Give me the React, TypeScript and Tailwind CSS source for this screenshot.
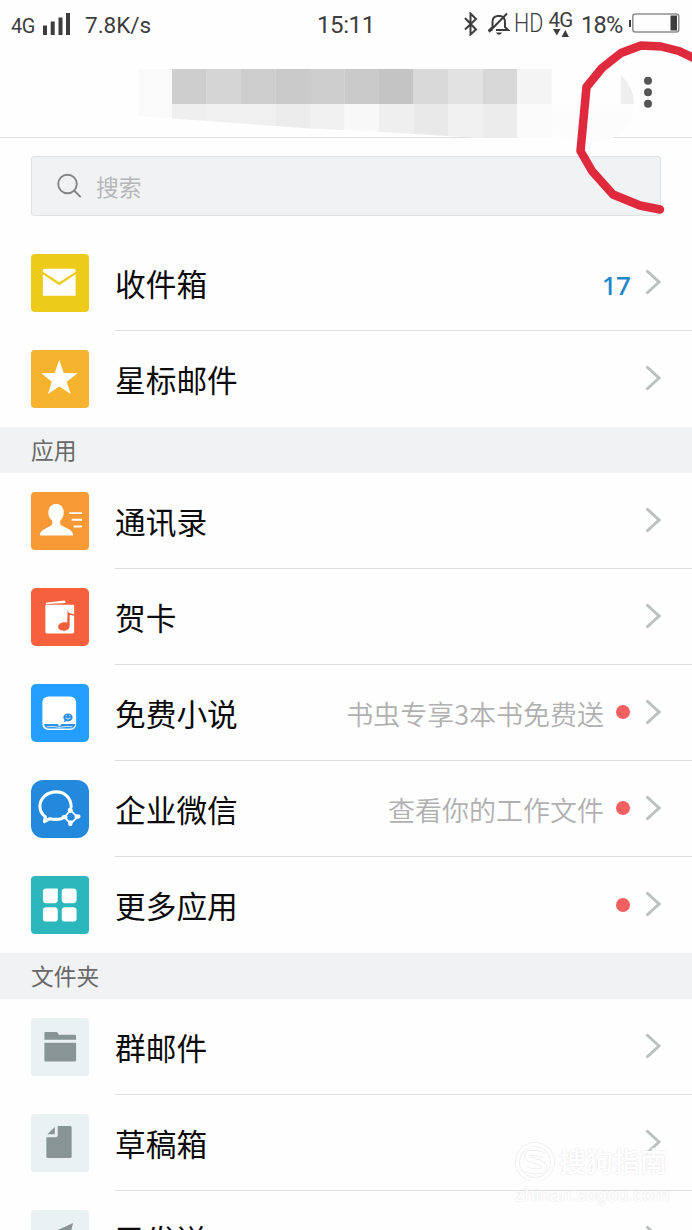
import type { ReactNode } from 'react';

const Chevron = () => (
  <svg className="-mt-0.5 h-[26px] w-4 shrink-0" viewBox="0 0 16 26" fill="none" stroke="#bcc0c1" strokeWidth="3">
    <path d="M1.500 1.500 14 13 1.500 24.500" />
  </svg>
);

type RowProps = {
  label: string;
  tile: string;
  icon: ReactNode;
  count?: string;
  hint?: string;
  dot?: boolean;
  last?: boolean;
};

function Row({ label, tile, icon, count, hint, dot, last }: RowProps) {
  return (
    <li className="flex h-24 shrink-0 items-stretch pl-[31px]">
      <div className={`mt-[19px] size-[57.500px] shrink-0 overflow-hidden ${tile}`}>
        <svg className="size-full" viewBox="0 0 58 58" fill="#fff">
          {icon}
        </svg>
      </div>
      <div className={`ml-[26.500px] flex grow items-center pr-[31px] ${last ? '' : 'border-b border-[#dedfe0]'}`}>
        <span className="grow whitespace-nowrap text-[30.700px] leading-[46px] text-[#0b0b0b]">{label}</span>
        {hint && <span className="mr-[12px] mt-0.5 whitespace-nowrap text-[27px] font-[350] leading-10 text-[#b0b0b0]">{hint}</span>}
        {count && <span className="mr-[15px] mt-1 font-['Noto_Sans',sans-serif] text-[26px] font-medium leading-10 tracking-[-0.800px] text-[#2087c6]">{count}</span>}
        {dot && <span className="-mt-px mr-[15px] size-3.5 shrink-0 rounded-full bg-[#f4605f]" />}
        <Chevron />
      </div>
    </li>
  );
}

const Section = ({ title }: { title: string }) => (
  <h2 className="flex h-[46px] shrink-0 items-center bg-[#f0f2f4] pl-[31px] text-[22.800px] leading-[34px] text-[#686868]">{title}</h2>
);

const MailIcon = (
  <>
    <path d="M14 15h29q2 0 2 2v1L28.500 28.500 12 18v-1q0-2 2-2z" />
    <path d="M12 20.500 28.500 31.500 45 20.500V42H12z" />
  </>
);
const StarIcon = <path d="m28.500 10 4.600 13.200 13.900.3L36 32l4 12.500-11.500-7.800L17 44.500 21 32 10.500 23.500l13.400-.3z" />;
const ContactIcon = (
  <>
    <path d="M25.300 12c5 0 8 4 7.700 9-.2 4-2 6.500-3.500 8v3.500c1.500 3 13 4.500 13 10.500 0 1-.5 1-1 1H10c-1 0-1-.5-1-1.500 1-5.500 11-7 12.500-10V29c-2-1.500-4-4-4-8 0-5.500 2.800-9 7.800-9z" />
    <path d="M38.500 21.300h13M41 28h10.500M43 34.800h8.500" stroke="#fff" strokeWidth="1.900" />
  </>
);
const CardIcon = (
  <>
    <path d="M15 17v-1.200q0-1 1-1.100l18-2.200 1 2.700-18 .9z" />
    <path d="M16 17h26q1.500 0 1.500 1.500V44q0 2-1.500 2H16q-1.500 0-1.500-2V18.500q0-1.500 1.500-1.500z" />
    <path d="M37 21c0 4 2 5 6.500 5.500l-.2 1.500c-2.400-.8-4-.8-4.300-.5v10.500c0 3.500-2.700 5-6 5-4 0-6-1.800-5.600-4.300.6-3.300 5.500-5 9.100-3.700z" fill="#ef5f3b" />
  </>
);
const BookIcon = (
  <>
    <rect x="11.500" y="12.500" width="34" height="34" rx="6" />
    <path d="M13 40.300h14.300q.3 2 1.600 2 1.200 0 1.500-2h14.300q-.8 4.500-5 4.500H18q-4 0-5-4.500z" fill="#2e94e8" />
    <path d="M16 43.300c4-.7 8-.5 11 .3h3.700c3-.8 7-1 11-.3" fill="none" stroke="#fff" strokeWidth=".8" />
    <ellipse cx="37.300" cy="33.700" rx="4.700" ry="4" fill="#2c8fe0" />
    <path d="m34 36-1 2.500 3-1z" fill="#2c8fe0" />
    <path d="M34.800 34.300q2.500 2 5 0" fill="none" stroke="#fff" strokeWidth=".8" />
    <circle cx="35.600" cy="32" r=".6" />
    <circle cx="39" cy="32" r=".6" />
  </>
);
const WorkIcon = (
  <>
    <path d="M40.500 27C40.500 17.500 33.500 12 25.500 12 16 12 9 18.500 9 26.500c0 4.500 2 8 5.500 10.500L13.500 42l5.500-3c4 1 8 1 12 0" fill="none" stroke="#fff" strokeWidth="3.100" strokeLinecap="round" strokeLinejoin="round" />
    <path d="m39.800 30.500 7 7-7 6.500-6-6.500z" fill="none" stroke="#fff" strokeWidth="1.800" />
    <ellipse cx="39.600" cy="30.500" rx="2.400" ry="2.800" />
    <ellipse cx="46.900" cy="36.800" rx="3" ry="2.200" />
    <ellipse cx="39.700" cy="43.500" rx="2.200" ry="3" />
    <ellipse cx="33.800" cy="37.500" rx="3" ry="2.200" />
  </>
);
const GridIcon = (
  <>
    <path d="M15.500 12.500H27V24q0 3.500-3.500 3.500h-8q-3.500 0-3.500-3.500v-8q0-3.500 3.500-3.500z" />
    <path d="M34.500 12.500h8Q46 12.500 46 16v8q0 3.500-3.500 3.500h-8Q31 27.500 31 24v-8q0-3.500 3.500-3.500z" />
    <path d="M15.500 31.500h8Q27 31.500 27 35v8q0 3-3.500 3h-8Q12 46 12 43v-8q0-3.500 3.500-3.500z" />
    <path d="M34.500 31.500h8Q46 31.500 46 35v8q0 3-3.500 3h-8Q31 46 31 43v-8q0-3.500 3.500-3.500z" />
  </>
);
const FolderIcon = (
  <g fill="#899496">
    <path d="M14.500 14h11q1 0 1.500 1l1 2h16q1.500 0 1.500 1.500v3.500h-32v-7q0-1 1-1z" />
    <path d="M13.500 25h32v17.500q0 1.500-1.500 1.500H15q-1.500 0-1.500-1.500z" />
  </g>
);
const DraftIcon = (
  <g fill="#899496">
    <path d="M27 12h12.500q1.500 0 1.500 1.500V43q0 1.500-1.500 1.500H17q-1.500 0-1.500-1.500V23.500H25q2 0 2-2z" />
    <path d="M24 13v7.500h-7.500z" />
  </g>
);
const SentIcon = <path d="m42.500 13-30 14 10 4 1.500 10 5-6 7 4z" fill="#899496" />;

const mosaic = [
  ['#cecece', '#efefef'],
  ['#d5d5d5', '#f0f0f0'],
  ['#cdcdcd', '#f0f0f0'],
  ['#cacaca', '#ececec'],
  ['#cdcdcd', '#f0f0f0'],
  ['#cacaca', '#f8f8f8'],
  ['#c4c4c4', '#efefef'],
  ['#d9d9d9', '#e9e9e9'],
  ['#e2e2e2', '#f0f0f0'],
  ['#d7d7d7', '#ececec'],
  ['#f4f4f4', '#fbfbfb'],
];

const StatusBar = () => (
  <div className="flex h-12 shrink-0 items-center font-[Roboto,sans-serif] text-[#3d3d3d]">
    <div className="flex w-[317px] items-center pl-[11px]">
      <span className="mt-1 w-[26px] text-[20px] leading-6 tracking-[-0.5px]">4G</span>
      <svg className="ml-[6px] h-[22px] w-7" viewBox="0 0 28 22" fill="#3d3d3d">
        <path d="M0 12.500h4V22H0zM7.700 8.500h4V22h-4zM15.500 4.500h4V22h-4zM23 0h4v22h-4z" />
      </svg>
      <span className="ml-[14px] mt-0.5 text-[22.500px] leading-7">7.8K/s</span>
    </div>
    <span className="w-[146px] pt-0.5 text-[24px] leading-7 tracking-[-0.400px]">15:11</span>
    <svg className="h-6 w-4" viewBox="0 0 16 24" fill="none" stroke="#3d3d3d" strokeWidth="2">
      <path d="m2 6 11 11.500-5.500 5V1.500L13 7 2 17.500" />
    </svg>
    <svg className="ml-[9px] h-6 w-[22px]" viewBox="0 0 22 24" fill="none" stroke="#3d3d3d" strokeWidth="2">
      <path d="M4.500 15V10q0-5.500 5-6h3q4.500 1 4.500 6v5l3 3H8M4.500 15l-3 3h3M1 20 19 1.500" />
      <path d="M8 20.500h6q-1 2.200-3 2.200t-3-2.200z" fill="#3d3d3d" stroke="none" />
    </svg>
    <span className="ml-[4px] w-[31px] origin-left scale-x-[0.860] text-[25px] font-light leading-7">HD</span>
    <span className="ml-[2px] flex w-[27px] flex-col items-center">
      <span className="text-[20.500px] leading-[19px] tracking-[-0.700px]">4G</span>
      <svg className="-mt-px h-2 w-4" viewBox="0 0 16 8" fill="#3d3d3d">
        <path d="M0 0h7.500L3.800 6.500zM8.500 8H16l-3.700-7z" />
      </svg>
    </span>
    <span className="ml-[7px] mt-px w-[44px] whitespace-nowrap text-[23.500px] leading-7 tracking-[-0.700px]">18%</span>
    <svg className="-mt-0.5 ml-[4px] h-5 w-[52px]" viewBox="0 0 52 20" fill="none">
      <rect x="3.800" y="1" width="46" height="18" rx="2.500" stroke="#8e8e8e" strokeWidth="1.500" />
      <path d="M0 7h2v7H0zM41.500 2.500H48v15h-6.500z" fill="#3d3d3d" />
    </svg>
  </div>
);

const TitleBar = () => (
  <header className="flex h-[90px] shrink-0 border-b border-[#dedfdf]">
    <svg className="h-[93px] w-[638px] shrink-0" viewBox="0 48 638 93">
      <defs>
        <clipPath id="brush">
          <path d="M138 69H552V141H520Q410 133 310 128.500L172 118.500 138 116z" />
        </clipPath>
      </defs>
      <path d="M498 138q60-3 118 0v2H498z" fill="#fefefe" />
      <path d="M552 105h82c0 22-15 35-38 37q-24-1-38-7h-6z" fill="#fcfcfc" />
      <g clipPath="url(#brush)">
        <rect x="138" y="69" width="34.500" height="49" fill="#fafafa" />
        {mosaic.map(([top, bottom], i) => (
          <g key={i}>
            <rect x={172 + i * 34.5} y="69" width="34.700" height="35" fill={top} />
            <rect x={172 + i * 34.5} y="104" width="34.700" height="34" fill={bottom} />
          </g>
        ))}
      </g>
      <path d="M621 75q13 13 13 29h-13z" fill="#eeeeee" />
    </svg>
    <svg className="ml-[5px] mt-[28px] h-8 w-[10px]" viewBox="0 0 10 32" fill="#555">
      <circle cx="5" cy="4.700" r="4" />
      <circle cx="5" cy="16.200" r="4" />
      <circle cx="5" cy="27.700" r="4" />
    </svg>
  </header>
);

export default function App() {
  return (
    <main className="relative flex h-[1230px] w-[692px] flex-col overflow-hidden bg-[#fefefe] font-['Noto_Sans_CJK_SC',sans-serif]">
      <StatusBar />
      <TitleBar />
      <div className="mx-[31px] mb-[19px] mt-[18px] flex h-[60px] shrink-0 items-center rounded-[3px] border border-[#dfe2e3] bg-[#f0f2f4] pl-[25px]">
        <svg className="size-[26px]" viewBox="0 0 26 26" fill="none" stroke="#828586" strokeWidth="1.900">
          <circle cx="10.500" cy="11" r="9.300" />
          <path d="m17 17.500 6.700 6.700" />
        </svg>
        <span className="ml-[13px] mt-0.5 text-[22.800px] leading-[34px] text-[#b6b7b8]">搜索</span>
      </div>
      <ul className="flex shrink-0 flex-col">
        <Row label="收件箱" tile="rounded-[4px] bg-[#edcb1b]" icon={MailIcon} count="17" />
        <Row label="星标邮件" tile="rounded-[4px] bg-[#f6b42e]" icon={StarIcon} last />
      </ul>
      <Section title="应用" />
      <ul className="flex shrink-0 flex-col">
        <Row label="通讯录" tile="rounded-[4px] bg-[#f79a35]" icon={ContactIcon} />
        <Row label="贺卡" tile="rounded-[5px] bg-[#f5603d]" icon={CardIcon} />
        <Row label="免费小说" tile="rounded-[5px] bg-[#249fff]" icon={BookIcon} hint="书虫专享3本书免费送" dot />
        <Row label="企业微信" tile="rounded-[12px] bg-[#2289dc]" icon={WorkIcon} hint="查看你的工作文件" dot />
        <Row label="更多应用" tile="rounded-[4px] bg-[#2cb7bc]" icon={GridIcon} dot last />
      </ul>
      <Section title="文件夹" />
      <ul className="flex shrink-0 flex-col">
        <Row label="群邮件" tile="rounded-[3px] bg-[#e9f1f3]" icon={FolderIcon} />
        <Row label="草稿箱" tile="rounded-[3px] bg-[#e9f1f3]" icon={DraftIcon} />
        <Row label="已发送" tile="rounded-[3px] bg-[#e9f1f3]" icon={SentIcon} />
      </ul>

      <div className="absolute left-[515px] top-[1141px] w-[160px] text-white [text-shadow:0_0_2px_#dcdcdc]">
        <div className="flex items-center">
          <svg className="size-10 shrink-0" viewBox="0 0 40 40" fill="none">
            <circle cx="20" cy="21" r="17.500" stroke="#f0f0f0" strokeWidth="5" />
            <circle cx="20" cy="21" r="17.500" stroke="#fff" strokeWidth="3" />
            <path d="M29 14q-17-5-17 1c0 5 17 5 17 11 0 6-13 5-18 2" stroke="#eeeeee" strokeWidth="6" />
            <path d="M29 14q-17-5-17 1c0 5 17 5 17 11 0 6-13 5-18 2" stroke="#fff" strokeWidth="4" />
          </svg>
          <span className="ml-[4px] whitespace-nowrap text-[27px] font-medium leading-10">搜狗指南</span>
        </div>
        <div className="mt-[4px] whitespace-nowrap font-['Liberation_Sans',sans-serif] text-[19px] leading-5">zhinan.sogou.com</div>
      </div>

      <svg className="absolute left-[572px] top-[36px] h-[184px] w-[120px]" viewBox="572 36 120 184" fill="none" stroke="#df2a3e" strokeWidth="8.500" strokeLinecap="round" strokeLinejoin="round">
        <path d="M700 61 679 51 661 46.500 641 45.500 621 53 602 68 586.500 87 580.500 151 592 171 613 194.500 640 205.500 660 209.500" />
      </svg>
    </main>
  );
}
